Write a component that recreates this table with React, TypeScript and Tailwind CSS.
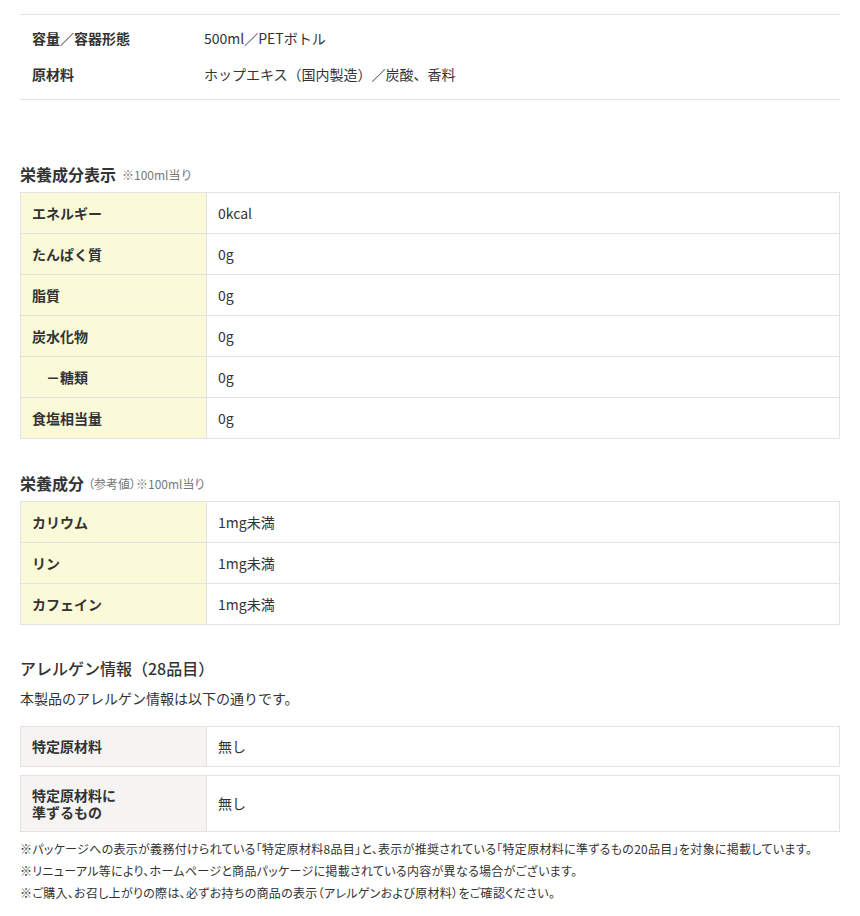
import React from 'react'

const font = { fontFamily: '"Noto Sans CJK JP", "Noto Sans", sans-serif' }

const nutrition = [
  { label: 'エネルギー', value: '0kcal' },
  { label: 'たんぱく質', value: '0g' },
  { label: '脂質', value: '0g' },
  { label: '炭水化物', value: '0g' },
  { label: '－糖類', value: '0g', indent: true },
  { label: '食塩相当量', value: '0g' },
]

const reference = [
  { label: 'カリウム', value: '1mg未満' },
  { label: 'リン', value: '1mg未満' },
  { label: 'カフェイン', value: '1mg未満' },
]

function NutritionTable({ rows }: { rows: { label: string; value: string; indent?: boolean }[] }) {
  return (
    <div className="border border-[#e2e2e2] border-b-0">
      {rows.map((r) => (
        <div key={r.label} className="flex border-b border-[#e2e2e2]">
          <div
            className={`w-[185px] shrink-0 bg-[#fbfad8] h-[40px] flex items-center font-bold text-[14px] ${
              r.indent ? 'pl-[25px]' : 'pl-[11px]'
            }`}
          >
            {r.label}
          </div>
          <div className="flex-1 border-l border-[#e2e2e2] h-[40px] flex items-center pl-[11px] text-[14px]">
            {r.value}
          </div>
        </div>
      ))}
    </div>
  )
}

function AllergenRow({ lines, value, tall }: { lines: string[]; value: string; tall?: boolean }) {
  return (
    <div className="flex border border-[#e2e2e2]">
      <div
        className={`w-[185px] shrink-0 bg-[#f5f4f2] flex flex-col justify-center pl-[11px] font-bold text-[14px] leading-[17px] ${
          tall ? 'h-[55px]' : 'h-[39px]'
        }`}
      >
        {lines.map((l) => (
          <div key={l}>{l}</div>
        ))}
      </div>
      <div className="flex-1 border-l border-[#e2e2e2] flex items-center pl-[11px] text-[14px]">{value}</div>
    </div>
  )
}

export default function App() {
  return (
    <div className="bg-white w-[860px] h-[916px] text-[#333] px-[20px] pt-[14px]" style={font}>
      <div className="border-t border-b border-[#e2e2e2] pt-[5px] pb-[7px]">
        <div className="flex h-[36px] items-center text-[14px]">
          <div className="w-[184px] pl-[12px] font-bold">容量／容器形態</div>
          <div>500ml／PETボトル</div>
        </div>
        <div className="flex h-[36px] items-center text-[14px]">
          <div className="w-[184px] pl-[12px] font-bold">原材料</div>
          <div>ホップエキス（国内製造）／炭酸、香料</div>
        </div>
      </div>

      <h2 className="mt-[62px] mb-[6px] h-[24px] flex items-end leading-[24px]">
        <span className="text-[16px] font-bold">栄養成分表示</span>
        <span className="text-[12px] text-[#777] ml-[6px] leading-[22px]">※100ml当り</span>
      </h2>
      <NutritionTable rows={nutrition} />

      <h2 className="mt-[32px] mb-[6px] h-[24px] flex items-end leading-[24px]">
        <span className="text-[16px] font-bold">栄養成分</span>
        <span className="text-[12px] text-[#777] ml-[4px] leading-[22px] [font-feature-settings:'palt']">
          （参考値）※100ml当り
        </span>
      </h2>
      <NutritionTable rows={reference} />

      <h2 className="mt-[31px] text-[16px] font-medium leading-[24px]">アレルゲン情報（28品目）</h2>
      <p className="mt-[7px] text-[14px] leading-[22px]">本製品のアレルゲン情報は以下の通りです。</p>

      <div className="mt-[17px] flex flex-col gap-[8px]">
        <AllergenRow lines={['特定原材料']} value="無し" />
        <AllergenRow tall lines={['特定原材料に', '準ずるもの']} value="無し" />
      </div>

      <div className="mt-[6px] text-[12px] leading-[22px] [font-feature-settings:'palt'] tracking-[0.3px]">
        <p>
          ※パッケージへの表示が義務付けられている「特定原材料8品目」と、表示が推奨されている「特定原材料に準ずるもの20品目」を対象に掲載しています。
        </p>
        <p>※リニューアル等により、ホームページと商品パッケージに掲載されている内容が異なる場合がございます。</p>
        <p>※ご購入、お召し上がりの際は、必ずお持ちの商品の表示（アレルゲンおよび原材料）をご確認ください。</p>
      </div>
    </div>
  )
}
